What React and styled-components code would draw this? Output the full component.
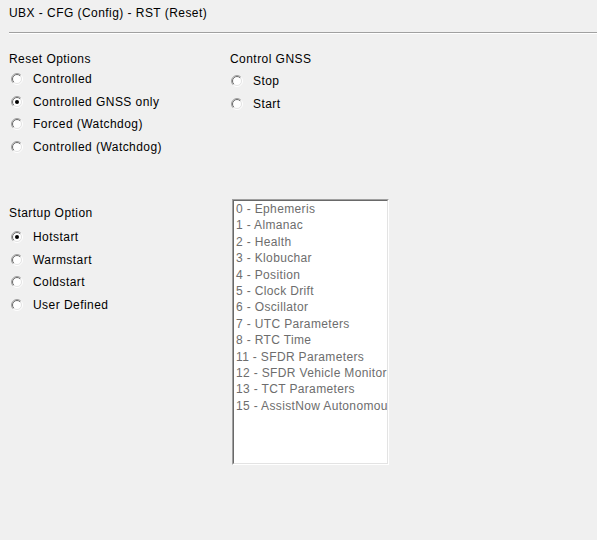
import React from "react";
import styled, { createGlobalStyle } from "styled-components";

const Global = createGlobalStyle`
  html, body { margin: 0; padding: 0; background: #f0f0f0; }
  #root { width: 597px; height: 540px; }
`;

const Page = styled.div`
  width: 597px;
  height: 540px;
  background: #f0f0f0;
  font-family: "Liberation Sans", Arial, sans-serif;
  font-size: 12px;
  letter-spacing: 0.45px;
  color: #000;
  box-sizing: border-box;
  overflow: hidden;
`;

const Title = styled.div`
  padding: 6px 0 0 9px;
  line-height: 14px;
  height: 14px;
`;

const Separator = styled.div`
  margin: 12px 0 0 9px;
  border-top: 1px solid #a0a0a0;
  border-bottom: 1px solid #ffffff;
`;

const TopRow = styled.div`
  display: flex;
  padding: 18px 0 0 9px;
`;

const Group = styled.div`
  width: ${(p) => p.$width}px;
  display: flex;
  flex-direction: column;
`;

const Heading = styled.div`
  height: ${(p) => p.$h}px;
  line-height: 14px;
`;

const Option = styled.label`
  display: flex;
  align-items: center;
  height: ${(p) => p.$h}px;
  padding-left: ${(p) => p.$indent}px;
  gap: 10px;
  line-height: 14px;
  white-space: nowrap;
`;

const BottomRow = styled.div`
  display: flex;
  padding: 41px 0 0 9px;
`;

const StartupGroup = styled(Group)`
  padding-top: 7px;
`;

const ListBox = styled.div`
  width: 157px;
  height: 266px;
  box-sizing: border-box;
  margin-left: 2px;
  border-style: solid;
  border-width: 1px;
  border-color: #a0a0a0 #ffffff #ffffff #a0a0a0;
  background: #fff;
  overflow: hidden;
`;

const ListInner = styled.div`
  height: 100%;
  box-sizing: border-box;
  border-style: solid;
  border-width: 1px;
  border-color: #696969 #e3e3e3 #e3e3e3 #696969;
  padding: 0 0 0 2px;
  overflow: hidden;
`;

const Item = styled.div`
  line-height: 16.4px;
  color: #6d6d6d;
  white-space: nowrap;
  letter-spacing: 0.35px;
`;

function Radio({ checked }) {
  return (
    <svg width="12" height="12" viewBox="0 0 12 12" style={{ flex: "none" }}>
      <defs>
        <linearGradient id="rOuter" x1="0" y1="0" x2="1" y2="1">
          <stop offset="0.45" stopColor="#a0a0a0" />
          <stop offset="0.55" stopColor="#ffffff" />
        </linearGradient>
        <linearGradient id="rInner" x1="0" y1="0" x2="1" y2="1">
          <stop offset="0.45" stopColor="#696969" />
          <stop offset="0.55" stopColor="#e3e3e3" />
        </linearGradient>
      </defs>
      <circle cx="6" cy="6" r="5.5" fill="none" stroke="url(#rOuter)" strokeWidth="1" />
      <circle cx="6" cy="6" r="4.5" fill="#fff" stroke="url(#rInner)" strokeWidth="1" />
      {checked && <circle cx="6" cy="6" r="2" fill="#000" />}
    </svg>
  );
}

const resetOptions = [
  ["Controlled", false],
  ["Controlled GNSS only", true],
  ["Forced (Watchdog)", false],
  ["Controlled (Watchdog)", false],
];

const gnssOptions = [
  ["Stop", false],
  ["Start", false],
];

const startupOptions = [
  ["Hotstart", true],
  ["Warmstart", false],
  ["Coldstart", false],
  ["User Defined", false],
];

const items = [
  "0 - Ephemeris",
  "1 - Almanac",
  "2 - Health",
  "3 - Klobuchar",
  "4 - Position",
  "5 - Clock Drift",
  "6 - Oscillator",
  "7 - UTC Parameters",
  "8 - RTC Time",
  "11 - SFDR Parameters",
  "12 - SFDR Vehicle Monitoring",
  "13 - TCT Parameters",
  "15 - AssistNow Autonomous",
];

export default function App() {
  return (
    <Page>
      <Global />
      <Title>UBX - CFG (Config) - RST (Reset)</Title>
      <Separator />
      <TopRow>
        <Group $width={221}>
          <Heading $h={16}>Reset Options</Heading>
          {resetOptions.map(([t, c]) => (
            <Option key={t} $h={22.5} $indent={2}>
              <Radio checked={c} />
              {t}
            </Option>
          ))}
        </Group>
        <Group $width={200}>
          <Heading $h={18}>Control GNSS</Heading>
          {gnssOptions.map(([t, c]) => (
            <Option key={t} $h={22.5} $indent={1}>
              <Radio checked={c} />
              {t}
            </Option>
          ))}
        </Group>
      </TopRow>
      <BottomRow>
        <StartupGroup $width={221}>
          <Heading $h={20}>Startup Option</Heading>
          {startupOptions.map(([t, c]) => (
            <Option key={t} $h={22.5} $indent={2}>
              <Radio checked={c} />
              {t}
            </Option>
          ))}
        </StartupGroup>
        <ListBox>
          <ListInner>
            {items.map((t) => (
              <Item key={t}>{t}</Item>
            ))}
          </ListInner>
        </ListBox>
      </BottomRow>
    </Page>
  );
}
